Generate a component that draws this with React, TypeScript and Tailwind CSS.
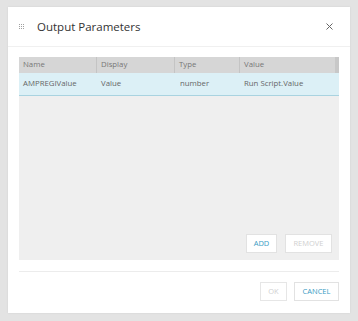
const rows = [
  { name: 'AMPREGIValue', display: 'Value', type: 'number', value: 'Run Script.Value' },
]

function Grip() {
  return (
    <svg width="6" height="6" viewBox="0 0 6 6" className="text-[#a0a0a0]">
      {[0, 2, 4].map((y) =>
        [0, 2, 4].map((x) => (
          <rect key={`${x}-${y}`} x={x} y={y} width="1" height="1" fill="currentColor" />
        ))
      )}
    </svg>
  )
}

export default function App() {
  return (
    <div
      className="w-[358px] h-[321px] bg-[#e3e3e3] pt-[7px] pl-[8px]"
      style={{ fontFamily: '"Open Sans", sans-serif' }}
    >
      <div className="w-[342px] h-[306px] bg-white shadow-[0_0_2px_rgba(0,0,0,0.08)] flex flex-col">
        <div className="h-[40px] flex items-center pl-[11px] pr-[17px] border-b border-[#f0f0f0]">
          <Grip />
          <span className="ml-[12px] text-[11.5px] text-[#333] leading-none">Output Parameters</span>
          <svg width="7" height="7" viewBox="0 0 7 7" className="ml-auto text-[#666]">
            <path d="M0.5 0.5L6.5 6.5M6.5 0.5L0.5 6.5" stroke="currentColor" strokeWidth="1" />
          </svg>
        </div>

        <div className="px-[11px] pt-[10px]">
          <div className="h-[203px] bg-[#efefef] flex flex-col">
            <div className="flex h-[16px] bg-[#d6d6d6] text-[7.8px] text-[#777] items-stretch">
              <div className="w-[78px] pl-[4px] flex items-center border-r border-[#c4c4c4]">Name</div>
              <div className="w-[78px] pl-[4px] flex items-center border-r border-[#c4c4c4]">Display</div>
              <div className="w-[65px] pl-[4px] flex items-center border-r border-[#c4c4c4]">Type</div>
              <div className="flex-1 pl-[4px] flex items-center">Value</div>
              <div className="w-[4px] bg-[#c8c8c8]" />
            </div>
            {rows.map((r) => (
              <div
                key={r.name}
                className="flex h-[23px] bg-[#dcf0f6] border-b border-[#a9d3e0] text-[7.8px] text-[#666] items-center"
              >
                <div className="w-[78px] pl-[4px]">{r.name}</div>
                <div className="w-[78px] pl-[4px]">{r.display}</div>
                <div className="w-[65px] pl-[5px]">{r.type}</div>
                <div className="flex-1 pl-[4px]">{r.value}</div>
              </div>
            ))}
            <div className="mt-auto flex justify-end gap-[8px] pr-[7px] pb-[7px]">
              <button className="h-[19px] w-[31px] bg-white border border-[#e2e2e2] text-[7.5px] text-[#3a9cc4]">
                ADD
              </button>
              <button className="h-[19px] w-[47px] bg-white border border-[#e2e2e2] text-[7.5px] text-[#d0d0d0]">
                REMOVE
              </button>
            </div>
          </div>
          <div className="mt-[11px] border-t border-[#ececec]" />
          <div className="mt-[10px] flex justify-end gap-[7px]">
            <button className="h-[19px] w-[27px] bg-white border border-[#e6e6e6] text-[7.5px] text-[#d0d0d0]">
              OK
            </button>
            <button className="h-[19px] w-[45px] bg-white border border-[#e2e2e2] text-[7.5px] text-[#3a9cc4]">
              CANCEL
            </button>
          </div>
        </div>
      </div>
    </div>
  )
}
